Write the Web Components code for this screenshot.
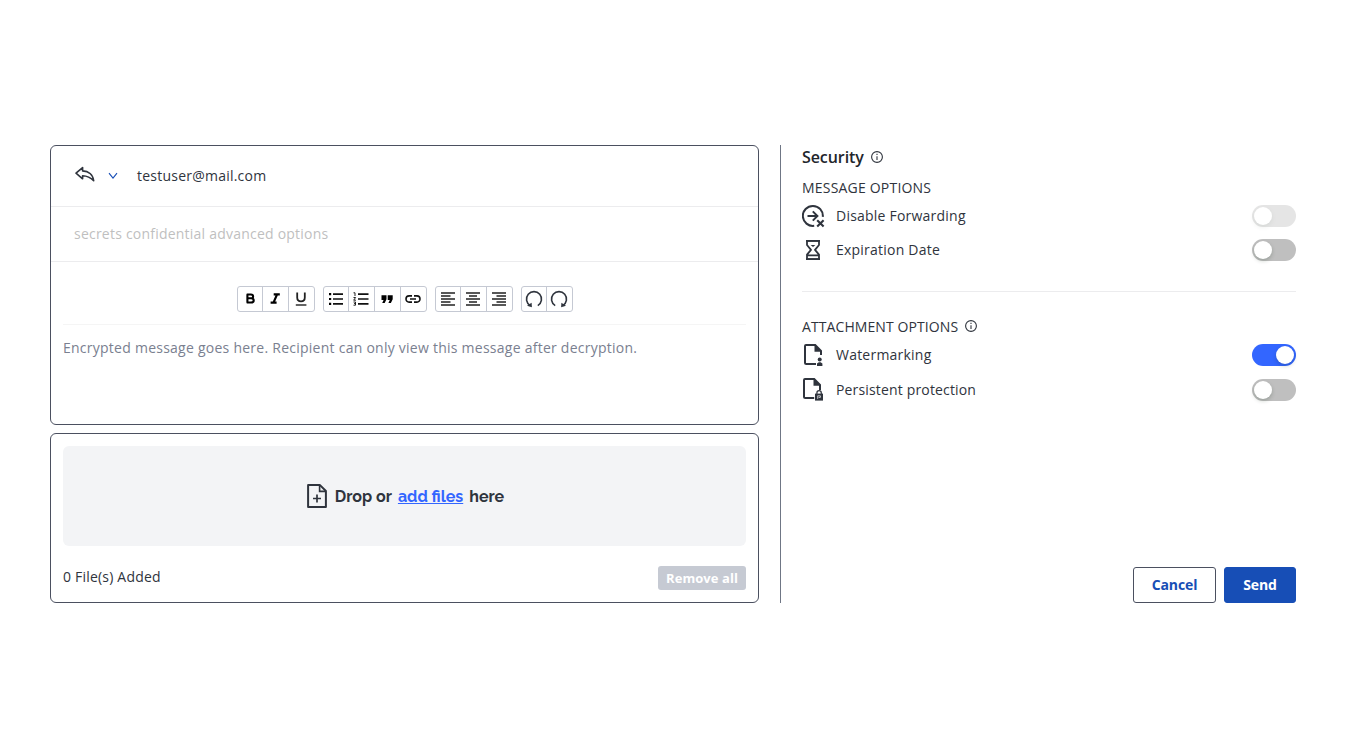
<!DOCTYPE html>
<html lang="en"><head><meta charset="utf-8"><title>Secure message</title>
<style>
body{margin:0;background:#fff;font:14px/22px "Open Sans",sans-serif;color:#2f343d}
</style></head><body><secure-compose></secure-compose>
<script>
const define=(name,html,init)=>customElements.define(name,class extends HTMLElement{
  connectedCallback(){
    if(this.shadowRoot)return;
    const t=document.createElement('template');
    t.innerHTML='<style>*{box-sizing:border-box}:host{display:block;box-sizing:border-box}svg{display:block}</style>'+html;
    this.attachShadow({mode:'open'}).append(t.content.cloneNode(true));
    if(init)init(this,this.shadowRoot);
  }
});
const file='<path d="M14 21H4.2Q3 21 3 20V3Q3 2 4 2H13.2L19 7.8V13" fill="none" stroke="currentColor" stroke-width="2"/><path d="M12.5 1.5V8.7H19.5Z" fill="currentColor"/>';
const lines=(a)=>`<path d="${a.map((p,i)=>`M${p[0]} ${2+i*3}H${p[1]}`).join('')}" stroke="#222" stroke-width="1.6"/>`;
const icons={
 reply:[20,17,'<path d="M1 7.2L7.6 1.6V4.9C13.5 5 18 8.4 18.7 14.8C15.5 11.4 12.5 9.8 7.6 9.7V12.8Z" fill="none" stroke="#2f343d" stroke-width="1.6" stroke-linejoin="round"/>'],
 chevron:[10,8,'<path d="M1 1.2L5 6.2L9 1.2" fill="none" stroke="#174eb6" stroke-width="1.1"/>'],
 bold:[16,16,'<path d="M5.4 3.2V11.8M4.7 3.5H8.9Q11.1 3.5 11.1 5.4Q11.1 7.3 8.9 7.3H5.4M8.9 7.3Q11.7 7.3 11.7 9.4T8.9 11.5H4.7" fill="none" stroke="#000" stroke-width="2.1"/>'],
 italic:[16,16,'<path d="M6.7 3.4H12.8M3.6 11.6H9.6M10.1 3.4L6.5 11.6" stroke="#000" stroke-width="2.2"/>'],
 underline:[16,16,'<path d="M4.2 1.5V6.4Q4.2 10.3 8 10.3T11.8 6.4V1.5" fill="none" stroke="#222" stroke-width="1.8"/><path d="M2.8 14H13.4" stroke="#222" stroke-width="1.4"/>'],
 bullets:[16,16,'<path d="M5 3.2H15M5 8H15M5 12.8H15" stroke="#111" stroke-width="1.7"/><path d="M1 3.2H3.2M1 8H3.2M1 12.8H3.2" stroke="#000" stroke-width="2.2"/>'],
 numbers:[16,16,'<path d="M5 3.2H15.5M5 8H15.5M5 12.8H15.5" stroke="#111" stroke-width="1.7"/><path d="M.5 1.8H2V5M.5 6.5H2.6L.7 9.2H3M.5 11H2.5V14.2H.5M1 12.6H2.5" fill="none" stroke="#222" stroke-width="1"/>'],
 quote:[16,16,'<path d="M2.5 4.2H7.5V8.2L5.7 12H3.2L4.6 8.9H2.5ZM8.7 4.2H13.7V8.2L11.9 12H9.4L10.8 8.9H8.7Z"/>'],
 link:[16,16,'<path d="M7 4.9H4.1A3.1 3.1 0 0 0 4.1 11.1H7M9 4.9H11.9A3.1 3.1 0 0 1 11.9 11.1H9M5 8H11" fill="none" stroke="#111" stroke-width="1.6"/>'],
 left:[16,16,lines([[1,15],[1,10.5],[1,15],[1,10.5],[1,15]])],
 center:[16,16,lines([[1,15],[4,12],[1,15],[4,12],[1,15]])],
 right:[16,16,lines([[1,15],[5.5,15],[1,15],[5.5,15],[1,15]])],
 undo:[18,18,'<path d="M5.2 15.6A7.5 7.5 0 1 1 12.8 15.6" fill="none" stroke="#2f343d" stroke-width="1.6"/><path d="M2 15.8L6.9 17.2L6.6 12.8Z" fill="#2f343d"/>'],
 redo:[18,18,'<path d="M5.2 15.6A7.5 7.5 0 1 1 12.8 15.6" fill="none" stroke="#2f343d" stroke-width="1.6"/><path d="M16 15.8L11.1 17.2L11.4 12.8Z" fill="#2f343d"/>'],
 add:[20,24,'<path d="M1.1 1.1H13L18.9 7V22.9H1.1Z" fill="none" stroke="currentColor" stroke-width="2" stroke-linejoin="round"/><path d="M12.6 1V7.4H19" fill="none" stroke="currentColor" stroke-width="1.6"/><path d="M10 10.5V18.5M6 14.5H14" stroke="currentColor" stroke-width="1.7"/>'],
 info:[12,12,'<circle cx="6" cy="6" r="5.4" fill="none" stroke="#2f343d" stroke-width="1.1"/><path d="M6 5.2V9M6 2.8V4" stroke="#2f343d" stroke-width="1.1"/>'],
 forward:[24,24,'<path d="M12.2 21.8A10 10 0 1 1 20.8 12.8" fill="none" stroke="currentColor" stroke-width="2"/><path d="M5.5 12H15M10.8 7.4L15.4 12L10.8 16.6" fill="none" stroke="currentColor" stroke-width="2"/><path d="M15.2 16.2L21.6 22.6M21.6 16.2L15.2 22.6" stroke="currentColor" stroke-width="2.1"/>'],
 hourglass:[24,24,'<path d="M5 2.9H17V7L13 11.8L17 16.6V21.2H5V16.6L9 11.8L5 7ZM5 17.4H17" fill="none" stroke="currentColor" stroke-width="1.8" stroke-linejoin="round"/><path d="M4 2.9H18M4 21.2H18" stroke="currentColor" stroke-width="1.8"/><path d="M8.6 7H13.4L11 9Z" fill="currentColor"/>'],
 watermark:[24,24,file+'<path d="M14 12H23V24H14Z" fill="#fff"/><circle cx="17.7" cy="16.4" r="2" fill="currentColor"/><path d="M15 23V20.6L16.8 19.3H18.6L20.4 20.6V23Z" fill="currentColor"/>'],
 protect:[24,24,'<g transform="translate(-1 -1)">'+file+'</g><path d="M12.2 12H24V24H12.2Z" fill="#fff"/><path d="M14.9 16V14.9A2.2 2.2 0 0 1 19.3 14.9V16" fill="none" stroke="currentColor" stroke-width="1.2"/><path d="M13 15.6H21V22.6H13Z" fill="currentColor"/><path d="M15.7 20.9V17.8H18.4V19.4H16.6" fill="none" stroke="#fff" stroke-width=".7"/>']
};
define('ui-icon','<style>:host{flex:none}</style>',(h,r)=>{
  const [w,k,p]=icons[h.getAttribute('name')];
  const t=document.createElement('template');
  t.innerHTML=`<svg width="${w}" height="${k}" viewBox="0 0 ${w} ${k}" aria-hidden="true">${p}</svg>`;
  r.append(t.content);
});
define('tool-group',`<style>:host{display:flex;height:26px;border:1px solid #c5c9d3;border-radius:3px}
 div{display:contents}span{flex:none;width:26px;display:grid;place-items:center;border-left:1px solid #c5c9d3}span:first-child{width:24px;border-left:0}</style><div></div>`,(h,r)=>{
  r.querySelector('div').innerHTML=h.getAttribute('items').split(' ').map(n=>`<span><ui-icon name="${n}"></ui-icon></span>`).join('');
});
define('ui-card',`<style>:host{border:1px solid #4b5060;border-radius:6px;background:#fff}</style><slot></slot>`);
define('ui-toggle',`<style>:host{flex:none;width:44px;height:22px;border-radius:11px;background:#bfbfbf;padding:2px}
 :host([on]){background:#36f;padding-left:24px}:host([disabled]){opacity:.4}
 i{display:block;width:18px;height:18px;border-radius:50%;background:#fff;box-shadow:0 2px 4px rgba(0,35,11,.2)}</style><i></i>`);
define('option-row',`<style>:host{display:flex;align-items:center;height:24px}.t{flex:1;padding-left:10px;letter-spacing:.22px}:host([icon=protect]) .t{letter-spacing:.16px}</style><span class="icon"></span><span class="t"><slot></slot></span><slot name="control"></slot>`,(h,r)=>{
  r.querySelector('.icon').innerHTML=`<ui-icon name="${h.getAttribute('icon')}"></ui-icon>`;
});
define('ui-button',`<style>:host{display:flex;align-items:center;justify-content:center;height:36px;border:1px solid #4b5060;border-radius:3px;font-weight:700;letter-spacing:-.1px;color:#174eb6;background:#fff}
:host([primary]){background:#174eb6;border-color:#174eb6;color:#fff}:host([muted]){height:24px;background:#c6cad3;border:0;color:#fff;font-size:13px;letter-spacing:.06px}</style><slot></slot>`);
define('message-editor',`<style>
 ui-card{height:280px}.to{display:flex;align-items:center;height:61px;border-bottom:1px solid #ececee;padding-left:24px}
 .reply{margin:-4px 13px 0 0}.to span{margin-left:19px;letter-spacing:.23px}
 .subject{height:55px;border-bottom:1px solid #ececee;padding:16px 23px;color:#bfbfbf;letter-spacing:.22px}
 .tools{display:flex;justify-content:center;gap:8px;margin:0 12px;padding:24px 0 12px;border-bottom:1px solid #f5f5f5}
 .body{padding:12px;color:#7a8090;letter-spacing:.25px}</style>
 <ui-card><div class="to"><ui-icon class="reply" name="reply"></ui-icon><ui-icon name="chevron"></ui-icon><span>testuser@mail.com</span></div>
 <div class="subject">secrets confidential advanced options</div>
 <div class="tools"><tool-group items="bold italic underline" style="width:78px"></tool-group><tool-group items="bullets numbers quote link" style="width:104px"></tool-group><tool-group items="left center right" style="width:78px"></tool-group><tool-group items="undo redo" style="width:52px"></tool-group></div>
 <div class="body">Encrypted message goes here. Recipient can only view this message after decryption.</div></ui-card>`);
define('file-drop',`<style>
 ui-card{height:170px;padding:12px}.drop{height:100px;border-radius:6px;background:#f3f4f6;display:flex;align-items:center;justify-content:center;padding-left:2px;font:700 16px/24px Raleway,Lato,sans-serif}
 .drop ui-icon{margin-right:8px}.drop span,.drop u{padding-top:2px}.drop u{color:#36f;margin:0 6px}
 .foot{display:flex;justify-content:space-between;margin-top:20px;letter-spacing:.2px}ui-button{width:88px}</style>
 <ui-card><div class="drop"><ui-icon name="add"></ui-icon><span>Drop or</span><u>add files</u><span>here</span></div>
 <div class="foot"><span>0 File(s) Added</span><ui-button muted>Remove all</ui-button></div></ui-card>`);
define('security-panel',`<style>
 :host{display:flex;flex-direction:column;height:458px;border-left:1px solid #6f7685;padding-left:21px}
 h2{font-size:16px;font-weight:600;line-height:24px;letter-spacing:-.08px;margin:0;display:flex;align-items:center;gap:7px;color:#22252b}
 .head{display:flex;align-items:center;gap:7px;line-height:22px}.message{margin-top:8px;letter-spacing:.2px}
 .attach{margin-top:24px;letter-spacing:.09px}.attach ui-icon{margin-bottom:2px}.line{height:1px;background:#ececee;margin:29px 0 0}
 option-row{margin-top:5px}option-row+option-row{margin-top:10px}.attach+option-row+option-row{margin-top:11px}
 .actions{margin-top:auto;display:flex;justify-content:flex-end;gap:8px}
 .c{width:83px}.s{width:72px}</style>
 <h2>Security <ui-icon name="info"></ui-icon></h2>
 <div class="head message">MESSAGE OPTIONS</div>
 <option-row icon="forward">Disable Forwarding<ui-toggle slot="control" disabled></ui-toggle></option-row>
 <option-row icon="hourglass">Expiration Date<ui-toggle slot="control"></ui-toggle></option-row>
 <div class="line"></div>
 <div class="head attach">ATTACHMENT OPTIONS <ui-icon name="info"></ui-icon></div>
 <option-row icon="watermark">Watermarking<ui-toggle slot="control" on></ui-toggle></option-row>
 <option-row icon="protect">Persistent protection<ui-toggle slot="control"></ui-toggle></option-row>
 <div class="actions"><ui-button class="c">Cancel</ui-button><ui-button class="s" primary>Send</ui-button></div>`);
define('secure-compose',`<style>:host{display:grid;grid-template-columns:709px 516px;gap:21px;padding:145px 50px}file-drop{margin-top:8px}</style>
 <main><message-editor></message-editor><file-drop></file-drop></main><security-panel></security-panel>`);
</script></body></html>
